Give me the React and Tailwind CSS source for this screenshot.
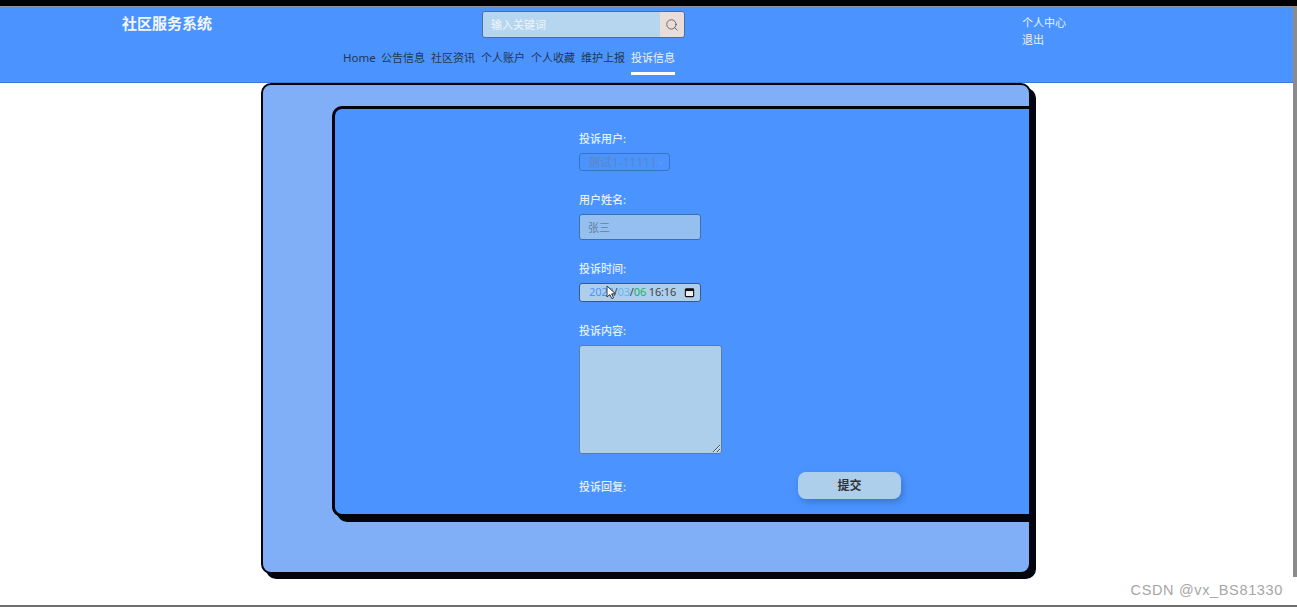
import { Search } from "lucide-react";

const navItems = ["Home", "公告信息", "社区资讯", "个人账户", "个人收藏", "维护上报"];

const Label = ({ children }) => (
    <label className="block text-[11px] leading-[16px] font-medium text-[#e4efff]">{children}</label>
);

const App = () => {
    return (
        <div
            className="h-[607px] w-[1297px] overflow-hidden bg-white flex flex-col"
            style={{ fontFamily: '"Noto Sans", "Noto Sans CJK SC", sans-serif' }}
        >
            <div className="h-[6px] bg-black shrink-0" />
            <div className="h-px bg-[#8a8f96] shrink-0" />

            <div className="flex flex-1 min-h-0">
                <div className="flex-1 min-w-0">
                    {/* header */}
                    <header className="h-[76px] bg-[#4b94ff] border-b border-[#3c7ad6]">
                        <div className="flex items-start h-[39px]">
                            <div className="w-[482px] pl-[122px] pt-[6px] text-[15px] leading-[20px] font-bold text-[#f2f7ff]">
                                社区服务系统
                            </div>
                            <div className="mt-[4px] w-[203px] h-[27px] flex border border-[#4a6f9f] rounded-[3px] overflow-hidden">
                                <input
                                    placeholder="输入关键词"
                                    className="flex-1 min-w-0 bg-[#b6d5ee] px-2 pt-[2px] text-[11px] outline-none placeholder:text-[#eef5fb]"
                                />
                                <button className="w-[24px] bg-[#e8ddd9] flex items-center justify-center text-[#555]">
                                    <Search size={14} strokeWidth={1.4} />
                                </button>
                            </div>
                            <div className="ml-[337px] pt-[7px] text-[11px] leading-[17px] text-[#e8f1ff]">
                                <div>个人中心</div>
                                <div>退出</div>
                            </div>
                        </div>
                        <nav className="flex gap-[6px] pl-[343px] text-[11px]">
                            <a className="h-[29px] pt-[4px] leading-[16px] text-[#24364f] w-[32px] text-[11.5px]">Home</a>
                            {navItems.slice(1).map((item) => (
                                <a key={item} className="h-[29px] pt-[4px] leading-[16px] text-[#24364f]">
                                    {item}
                                </a>
                            ))}
                            <a className="h-[29px] pt-[4px] leading-[16px] text-[#e8f1ff] border-b-[3px] border-white">
                                投诉信息
                            </a>
                        </nav>
                    </header>

                    {/* form card */}
                    <div className="ml-[261px] w-[770px] h-[491px] border-[2.5px] border-[#04040f] rounded-[10px] bg-[#80aff8] shadow-[5px_5px_0_#04040f] pl-[69px] pt-[21px] overflow-hidden">
                        <div className="w-[800px] h-[411px] border-[3px] border-[#04040f] rounded-[10px] bg-[#4b94ff] shadow-[5px_5px_0_#04040f] pl-[244px] pt-[22px]">
                            <Label>投诉用户:</Label>
                            <div className="relative mt-[6px] w-[91px]">
                                <select
                                    disabled
                                    className="block appearance-none w-full h-[18px] border border-[#3a75c2] rounded-[3px] bg-transparent pl-[8px] text-[12px] text-[#5f86bd] disabled:opacity-100"
                                >
                                    <option>测试1-11111</option>
                                </select>
                                <svg width="8" height="5" viewBox="0 0 8 5" className="absolute right-[5px] top-[7px]">
                                    <path d="M1 1 L4 4 L7 1" fill="none" stroke="#6f9bd8" strokeWidth="1" />
                                </svg>
                            </div>

                            <div className="mt-[21px]">
                                <Label>用户姓名:</Label>
                            </div>
                            <input
                                readOnly
                                placeholder="张三"
                                className="block mt-[6px] w-[122px] h-[26px] border border-[#3e6fa8] rounded-[3px] bg-[#94bfee] px-2 text-[11px] outline-none placeholder:text-[#65809f]"
                            />

                            <div className="mt-[21px]">
                                <Label>投诉时间:</Label>
                            </div>
                            <div className="relative mt-[6px] w-[122px] h-[19px] border border-[#34598c] rounded-[3px] bg-[#aecfec] pl-[9px] pr-[5px] flex items-center justify-between text-[11px] tracking-[-0.15px] text-[#444]">
                                <span>
                                    <span className="text-[#4b94ff]">2023</span>
                                    <span>/</span>
                                    <span className="text-[#5fb8f0]">03</span>
                                    <span>/</span>
                                    <span className="text-[#20b060]">06</span>
                                    <span> 16:16</span>
                                </span>
                                <svg width="11" height="11" viewBox="0 0 12 12" className="shrink-0">
                                    <rect x="1.5" y="2" width="9" height="8.5" rx="1" fill="#e8eef3" stroke="#111" strokeWidth="1.2" />
                                    <rect x="1.5" y="2" width="9" height="2.4" fill="#111" />
                                </svg>
                                {/* mouse pointer */}
                                <svg width="11" height="15" viewBox="0 0 11 15" className="absolute left-[26px] top-[1px]">
                                    <path d="M1 1 L1 12 L3.8 9.6 L5.8 13.6 L7.6 12.8 L5.6 8.9 L9.4 8.7 Z" fill="#fff" stroke="#333" strokeWidth="1" />
                                </svg>
                            </div>

                            <div className="mt-[21px]">
                                <Label>投诉内容:</Label>
                            </div>
                            <textarea
                                readOnly
                                className="block mt-[6px] w-[143px] h-[109px] border border-[#5a7da5] rounded-[3px] bg-[#aecfec] outline-none"
                            />

                            <div className="flex items-center mt-[18px]">
                                <div className="w-[219px] pt-[2px]">
                                    <Label>投诉回复:</Label>
                                </div>
                                <button className="w-[103px] h-[27px] rounded-[8px] bg-[#aecfec] text-[12px] font-bold text-[#333] shadow-[2px_3px_7px_rgba(30,60,120,0.35)]">
                                    提交
                                </button>
                            </div>
                        </div>
                    </div>
                </div>

                {/* scrollbar */}
                <div className="w-[4px] shrink-0">
                    <div className="h-[570px] bg-[#8b8b8b]" />
                </div>
            </div>

            <div className="h-[26px] -mt-[30px] mb-[2px] shrink-0 flex justify-end pr-[14px] text-[14.5px] leading-[26px] text-[#a6a6a6] tracking-[0.65px]" style={{ fontFamily: '"Liberation Sans", sans-serif' }}>
                CSDN @vx_BS81330
            </div>
            <div className="h-[2px] bg-[#6f6f6f] shrink-0" />
        </div>
    );
};

export default App;
